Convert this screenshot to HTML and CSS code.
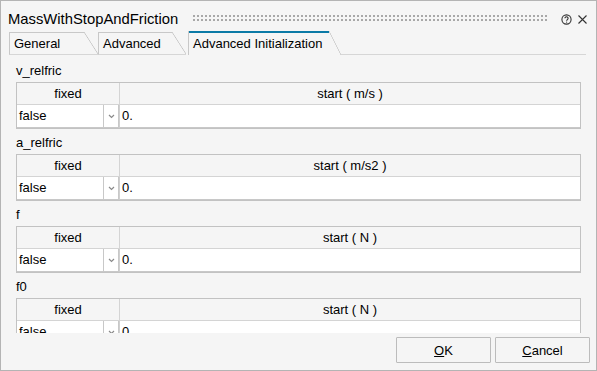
FILE: index.html
```html
<!DOCTYPE html>
<html>
<head>
<meta charset="utf-8">
<link rel="stylesheet" href="styles.css">
</head>
<body>
<div class="window">
  <div class="titlebar">
    <span class="title">MassWithStopAndFriction</span>
    <div class="grip"></div>
    <span class="help"><svg width="11" height="11" viewBox="0 0 11 11"><circle cx="5.5" cy="5.5" r="4.6" fill="none" stroke="#333" stroke-width="1.1"/><path d="M3.9 4.3a1.6 1.6 0 1 1 2.4 1.4c-0.5 0.3-0.7 0.6-0.7 1.1" fill="none" stroke="#333" stroke-width="1.1"/><circle cx="5.6" cy="8.1" r="0.6" fill="#333"/></svg></span>
    <span class="close"><svg width="9" height="9" viewBox="0 0 9 9"><path d="M0.5 0.5L8.5 8.5M8.5 0.5L0.5 8.5" stroke="#333" stroke-width="1.1"/></svg></span>
  </div>
  <div class="tabs">
    <div class="tab tab-general">General</div>
    <div class="tab tab-advanced">Advanced</div>
    <div class="tab active">Advanced Initialization</div>
    <div class="tabfill"></div>
  </div>
  <div class="content">
    <div class="section">
      <div class="label">v_relfric</div>
      <div class="tbl">
        <div class="hcell first">fixed</div>
        <div class="hcell">start ( m/s )</div>
        <div class="dcell first"><div class="select"><span class="sel-text">false</span><span class="sel-arrow"><svg width="7" height="5" viewBox="0 0 7 5"><path d="M1 1L3.5 3.5L6 1" fill="none" stroke="#8a8a8a" stroke-width="1.2"/></svg></span></div></div>
        <div class="dcell input">0.</div>
      </div>
    </div>
    <div class="section">
      <div class="label">a_relfric</div>
      <div class="tbl">
        <div class="hcell first">fixed</div>
        <div class="hcell">start ( m/s2 )</div>
        <div class="dcell first"><div class="select"><span class="sel-text">false</span><span class="sel-arrow"><svg width="7" height="5" viewBox="0 0 7 5"><path d="M1 1L3.5 3.5L6 1" fill="none" stroke="#8a8a8a" stroke-width="1.2"/></svg></span></div></div>
        <div class="dcell input">0.</div>
      </div>
    </div>
    <div class="section">
      <div class="label">f</div>
      <div class="tbl">
        <div class="hcell first">fixed</div>
        <div class="hcell">start ( N )</div>
        <div class="dcell first"><div class="select"><span class="sel-text">false</span><span class="sel-arrow"><svg width="7" height="5" viewBox="0 0 7 5"><path d="M1 1L3.5 3.5L6 1" fill="none" stroke="#8a8a8a" stroke-width="1.2"/></svg></span></div></div>
        <div class="dcell input">0.</div>
      </div>
    </div>
    <div class="section">
      <div class="label">f0</div>
      <div class="tbl">
        <div class="hcell first">fixed</div>
        <div class="hcell">start ( N )</div>
        <div class="dcell first"><div class="select"><span class="sel-text">false</span><span class="sel-arrow"><svg width="7" height="5" viewBox="0 0 7 5"><path d="M1 1L3.5 3.5L6 1" fill="none" stroke="#8a8a8a" stroke-width="1.2"/></svg></span></div></div>
        <div class="dcell input">0.</div>
      </div>
    </div>
  </div>
  <div class="footer">
    <button class="btn"><u>O</u>K</button>
    <button class="btn"><u>C</u>ancel</button>
  </div>
</div>
</body>
</html>
```

FILE: styles.css
```css
* { box-sizing: border-box; }
html, body { margin: 0; padding: 0; }
body {
  font-family: "Liberation Sans", Arial, sans-serif;
  font-size: 13px;
  color: #000;
  background: #f5f5f5;
}
.window {
  width: 597px;
  height: 371px;
  border: 1px solid #b4b4b4;
  background: #f5f5f5;
  display: flex;
  flex-direction: column;
  overflow: hidden;
}
.titlebar {
  height: 30px;
  flex: none;
  display: flex;
  align-items: center;
  padding: 6px 9px 0 7px;
}
.title {
  font-size: 14.8px;
  line-height: 18px;
  white-space: nowrap;
}
.grip {
  flex: 1;
  height: 6px;
  margin: 0 12px 2px 15px;
  background-image:
    linear-gradient(to right, transparent 2px, #f5f5f5 2px),
    linear-gradient(to bottom, #a8a8a8 2px, transparent 2px);
  background-size: 4px 4px, 4px 4px;
}
.help { display: flex; width: 11px; height: 11px; }
.close { display: flex; width: 9px; height: 9px; margin-left: 6px; }

.tabs {
  height: 24px;
  flex: none;
  display: flex;
  align-items: flex-end;
  padding-left: 8px;
}
.tab {
  position: relative;
  height: 23px;
  line-height: 24px;
  padding-left: 4px;
  border-left: 1px solid #c8c8c8;
  border-bottom: 1px solid #d6d6d6;
  white-space: nowrap;
}
.tab::before {
  content: "";
  position: absolute;
  left: 0;
  top: 0;
  right: 14px;
  height: 1px;
  background: #c8c8c8;
}
.tab::after {
  content: "";
  position: absolute;
  right: 0;
  top: 0;
  width: 14px;
  height: 22px;
  background: linear-gradient(to top right, transparent calc(50% - 0.7px), #c4c4c4 50%, transparent calc(50% + 0.7px));
}
.tab-general { width: 89px; }
.tab-advanced { width: 88px; }
.tab.active {
  width: 153px;
  height: 24px;
  line-height: 26px;
  margin-left: 2px;
  border-bottom: none;
}
.tab.active::before {
  right: 12px;
  height: 2px;
  background: #0b7aa6;
}
.tab.active::after {
  width: 12px;
  height: 24px;
}
.tabfill {
  flex: 1;
  height: 1px;
  background: #d6d6d6;
  margin-right: 10px;
}

.content {
  height: 278px;
  flex: none;
  overflow: hidden;
  padding: 7px 0 0 15px;
}
.section { margin-bottom: 5px; }
.label {
  height: 18px;
  line-height: 18px;
  margin-bottom: 2px;
}
.tbl {
  width: 565px;
  border: 1px solid #c2c2c2;
  display: grid;
  grid-template-columns: 103px 1fr;
}
.hcell {
  height: 22px;
  line-height: 21px;
  text-align: center;
  border-bottom: 1px solid #d4d4d4;
}
.hcell.first { border-right: 1px solid #d4d4d4; }
.dcell {
  height: 23px;
  border-bottom: 1px solid #c8c8c8;
  background: #fff;
}
.dcell.first {
  border-right: 1px solid #d0d0d0;
  background: #f5f5f5;
}
.select {
  display: flex;
  height: 22px;
  background: #fff;
  border-right: 1px solid #c8c8c8;
}
.sel-text {
  flex: 1;
  line-height: 22px;
  padding-left: 2px;
  border-right: 1px solid #c8c8c8;
}
.sel-arrow {
  width: 14px;
  display: flex;
  align-items: center;
  justify-content: center;
  padding-top: 1px;
}
.input {
  line-height: 22px;
  padding-left: 2px;
}

.footer {
  flex: 1;
  display: flex;
  justify-content: flex-end;
  gap: 4px;
  padding: 4px 6px 0 0;
}
.btn {
  width: 95px;
  height: 26px;
  border: 1px solid #bcbcbc;
  border-radius: 1px;
  background: #f5f5f5;
  font-family: "Liberation Sans", Arial, sans-serif;
  font-size: 13px;
  color: #000;
  padding: 0;
}
.btn u { text-decoration: underline; text-underline-offset: 1px; }
```
